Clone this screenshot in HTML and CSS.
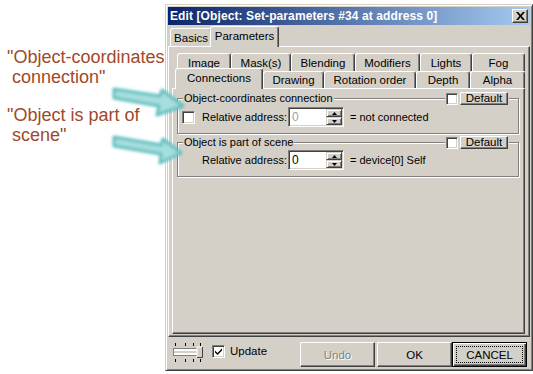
FILE: index.html
```html
<!DOCTYPE html>
<html>
  <head>
    <title>Edit [Object: Set-parameters #34 at address 0]</title>
    <meta charset="UTF-8">
    <meta name="viewport" content="width=device-width, initial-scale=1">
    <link rel="stylesheet" href="styles.css">
  </head>
  <body>
    <div class="page">
      <div class="notes">
        <p class="note">"Object-coordinates<br>&nbsp;connection"</p>
        <p class="note">"Object is part of<br>&nbsp;scene"</p>
      </div>

      <div class="window">
        <div class="titlebar">
          <span class="title">Edit [Object: Set-parameters #34 at address 0]</span>
          <span class="close">
            <svg width="9" height="8" viewBox="0 0 9 8">
              <path d="M0 0h2.2l2.3 2.8 2.3-2.8h2.2l-3.4 4 3.4 4h-2.2l-2.3-2.8-2.3 2.8h-2.2l3.4-4z" fill="#000"/>
            </svg>
          </span>
        </div>

        <div class="tabrow top-tabs">
          <div class="tab" style="width:42px">Basics</div>
          <div class="tab active" style="width:69px">Parameters</div>
        </div>

        <div class="panel outer-panel">
          <div class="tabrow back-tabs">
            <div class="tab" style="width:54px">Image</div>
            <div class="tab" style="width:60px">Mask(s)</div>
            <div class="tab" style="width:64px">Blending</div>
            <div class="tab" style="width:65px">Modifiers</div>
            <div class="tab" style="width:52px">Lights</div>
            <div class="tab" style="width:53px">Fog</div>
          </div>
          <div class="tabrow front-tabs">
            <div class="tab active" style="width:88px">Connections</div>
            <div class="tab" style="width:61px">Drawing</div>
            <div class="tab" style="width:92px">Rotation order</div>
            <div class="tab" style="width:54px">Depth</div>
            <div class="tab" style="width:55px">Alpha</div>
          </div>

          <div class="panel inner-panel">
            <div class="group group-one">
              <div class="group-head">
                <span class="legend">Object-coordinates connection</span>
                <span class="head-right">
                  <span class="check"></span>
                  <span class="btn small-btn">Default</span>
                </span>
              </div>
              <div class="field-row">
                <span class="check"></span>
                <span class="field-label">Relative address:</span>
                <span class="spin">
                  <span class="spin-value disabled">0</span>
                  <span class="spin-buttons">
                    <span class="spin-btn"><svg width="5" height="3" viewBox="0 0 5 3"><path d="M2.5 0L5 3H0z" fill="#000"/></svg></span>
                    <span class="spin-btn"><svg width="5" height="3" viewBox="0 0 5 3"><path d="M0 0h5L2.5 3z" fill="#000"/></svg></span>
                  </span>
                </span>
                <span class="field-note">= not connected</span>
              </div>
            </div>

            <div class="group group-two">
              <div class="group-head">
                <span class="legend">Object is part of scene</span>
                <span class="head-right">
                  <span class="check"></span>
                  <span class="btn small-btn">Default</span>
                </span>
              </div>
              <div class="field-row">
                <span class="check-space"></span>
                <span class="field-label">Relative address:</span>
                <span class="spin">
                  <span class="spin-value">0</span>
                  <span class="spin-buttons">
                    <span class="spin-btn"><svg width="5" height="3" viewBox="0 0 5 3"><path d="M2.5 0L5 3H0z" fill="#000"/></svg></span>
                    <span class="spin-btn"><svg width="5" height="3" viewBox="0 0 5 3"><path d="M0 0h5L2.5 3z" fill="#000"/></svg></span>
                  </span>
                </span>
                <span class="field-note">= device[0] Self</span>
              </div>
            </div>
          </div>
        </div>

        <div class="footer">
          <svg class="slider" width="32" height="22" viewBox="0 0 32 22">
            <g fill="#000">
              <rect x="2" y="1" width="1" height="3"/><rect x="12" y="1" width="1" height="3"/>
              <rect x="20" y="1" width="1" height="3"/><rect x="27" y="1" width="1" height="3"/>
              <rect x="2" y="17" width="1" height="3"/><rect x="12" y="17" width="1" height="3"/>
              <rect x="20" y="17" width="1" height="3"/><rect x="27" y="17" width="1" height="3"/>
            </g>
            <rect x="0.5" y="6.5" width="26" height="7" fill="#fff" stroke="#808080"/>
            <rect x="1" y="9" width="25" height="2" fill="#d4d0c8"/>
            <rect x="24" y="5" width="6" height="11" fill="#d4d0c8"/>
            <path d="M24 16V5h6" fill="none" stroke="#fff"/>
            <path d="M24 15.5h5.5V5" fill="none" stroke="#404040"/>
          </svg>
          <span class="check checked">
            <svg width="9" height="9" viewBox="0 0 9 9"><path d="M1 3.5l2.5 2.5 4.5-4.5v2l-4.5 4.5-2.5-2.5z" fill="#000"/></svg>
          </span>
          <span class="update">Update</span>
          <span class="btn big-btn disabled-btn">Undo</span>
          <span class="btn big-btn">OK</span>
          <span class="btn big-btn default-btn"><span class="focus">CANCEL</span></span>
        </div>
      </div>

      <svg class="arrows" width="533" height="374" viewBox="0 0 533 374">
        <defs>
          <filter id="glow" x="-20%" y="-50%" width="140%" height="200%">
            <feGaussianBlur stdDeviation="1.4"/>
          </filter>
        </defs>
        <g filter="url(#glow)" stroke="#5fbfc0" stroke-width="3" stroke-linejoin="round" fill="#a6dedd">
          <path d="M114 89L160 96L162 90L183 106L157 115L159 106L114 98Z"/>
          <path d="M114 137L161 145L163 139L181 153L160 163L161 154L114 146Z"/>
        </g>
      </svg>
    </div>
  </body>
</html>
```

FILE: styles.css
```css
/* page with notes on the left and the dialog on the right */
body {
	margin: 0;
	background-color: #fff;
	font-family: "Liberation Sans", Arial, sans-serif;
	font-size: 11px;
	color: #000;
}
.page {
	position: relative;
	display: flex;
	width: 533px;
	height: 374px;
	overflow: hidden;
}
.notes {
	width: 165px;
	padding-top: 47px;
	box-sizing: border-box;
}
.note {
	margin: 0 0 18px 7px;
	font-size: 18px;
	line-height: 20px;
	color: #a0492a;
	white-space: nowrap;
}
.arrows {
	position: absolute;
	left: 0;
	top: 0;
	pointer-events: none;
}

/* the window */
.window {
	margin-top: 4px;
	width: 368px;
	height: 367px;
	box-sizing: border-box;
	padding: 2px;
	background-color: #d4d0c8;
	border: 1px solid;
	border-color: #d4d0c8 #404040 #404040 #d4d0c8;
	box-shadow: inset 1px 1px #fff, inset -1px -1px #808080;
	display: flex;
	flex-direction: column;
}
.titlebar {
	height: 18px;
	display: flex;
	align-items: center;
	justify-content: space-between;
	padding: 0 2px 0 2px;
	background: linear-gradient(to right, #0a246a, #a6caf0);
	color: #fff;
	font-weight: bold;
	font-size: 12px;
	letter-spacing: 0.1px;
}
.close {
	width: 16px;
	height: 14px;
	box-sizing: border-box;
	display: flex;
	align-items: center;
	justify-content: center;
	background-color: #d4d0c8;
	border: 1px solid;
	border-color: #fff #404040 #404040 #fff;
	box-shadow: inset -1px -1px #808080;
}

/* tabs */
.tabrow {
	display: flex;
	align-items: flex-end;
}
.tab {
	height: 18px;
	box-sizing: border-box;
	display: flex;
	align-items: center;
	justify-content: center;
	border: 1px solid;
	border-bottom: none;
	border-color: #fff #404040 #fff #fff;
	border-radius: 3px 3px 0 0;
	box-shadow: inset -1px 0 #808080;
	background-color: #d4d0c8;
	white-space: nowrap;
	font-size: 11.5px;
}
.tab.active {
	position: relative;
	z-index: 1;
	height: 21px;
	margin-bottom: -1px;
	padding-bottom: 2px;
}
.top-tabs {
	height: 21px;
	padding-left: 2px;
}
.top-tabs .tab.active {
	margin-left: -2px;
}
.back-tabs {
	height: 18px;
	padding-left: 5px;
}
.front-tabs {
	height: 17px;
	padding-left: 3px;
}
.front-tabs .tab {
	height: 17px;
}
.front-tabs .tab.active {
	height: 21px;
}

/* 3d panels */
.panel {
	box-sizing: border-box;
	border: 1px solid;
	border-color: #fff #404040 #404040 #fff;
	box-shadow: inset -1px -1px #808080;
}
.outer-panel {
	height: 291px;
	padding: 6px 1px 2px 3px;
}
.inner-panel {
	width: 353px;
	height: 246px;
	padding: 0 4px 0 4px;
}

/* group boxes */
.group {
	width: 342px;
	box-sizing: border-box;
	border: 1px solid #808080;
	box-shadow: inset 1px 1px #fff, 1px 1px #fff;
}
.group-one {
	margin-top: 9px;
	height: 36px;
}
.group-two {
	margin-top: 8px;
	height: 35px;
}
.group-head {
	height: 13px;
	margin-top: -7px;
	display: flex;
	justify-content: space-between;
	align-items: center;
	padding: 0 9px 0 5px;
}
.legend {
	background-color: #d4d0c8;
	padding: 0 1px;
	line-height: 13px;
}
.head-right {
	display: flex;
	align-items: center;
	gap: 2px;
	background-color: #d4d0c8;
	padding: 0 1px;
	height: 13px;
}
.field-row {
	display: flex;
	align-items: center;
	height: 20px;
	padding-left: 4px;
	margin-top: 2px;
}
.group-two .field-row {
	margin-top: 1px;
}
.field-label {
	width: 86px;
	padding-left: 7px;
}
.check-space {
	width: 13px;
}
.field-note {
	margin-left: 6px;
}

/* controls */
.check {
	width: 13px;
	height: 13px;
	box-sizing: border-box;
	display: inline-flex;
	align-items: center;
	justify-content: center;
	background-color: #fff;
	border: 1px solid;
	border-color: #808080 #fff #fff #808080;
	box-shadow: inset 1px 1px #404040, inset -1px -1px #d4d0c8;
}
.head-right .check {
	width: 12px;
	height: 12px;
}
.spin {
	width: 56px;
	height: 20px;
	box-sizing: border-box;
	display: flex;
	background-color: #fff;
	border: 1px solid;
	border-color: #808080 #fff #fff #808080;
	box-shadow: inset 1px 1px #404040, inset -1px -1px #d4d0c8;
	padding: 2px 1px 2px 2px;
}
.spin-value {
	flex: 1;
	padding-left: 1px;
	line-height: 14px;
	font-size: 12px;
}
.spin-value.disabled {
	color: #a0a0a0;
}
.spin-buttons {
	display: flex;
	flex-direction: column;
	width: 16px;
	margin-top: -1px;
	margin-bottom: -1px;
}
.spin-btn {
	flex: 1;
	box-sizing: border-box;
	display: flex;
	align-items: center;
	justify-content: center;
	background-color: #d4d0c8;
	border: 1px solid;
	border-color: #d4d0c8 #404040 #404040 #d4d0c8;
	box-shadow: inset 1px 1px #fff, inset -1px -1px #808080;
}
.btn {
	box-sizing: border-box;
	display: inline-flex;
	align-items: center;
	justify-content: center;
	background-color: #d4d0c8;
	border: 1px solid;
	border-color: #fff #404040 #404040 #fff;
	box-shadow: inset -1px -1px #808080;
}
.small-btn {
	width: 48px;
	height: 13px;
	line-height: 11px;
	font-size: 11.5px;
}

/* footer */
.footer {
	flex: 1;
	display: flex;
	align-items: flex-start;
	padding: 5px 3px 0 5px;
}
.footer .check {
	margin: 3px 0 0 7px;
}
.update {
	margin: 3px 0 0 5px;
	line-height: 13px;
	font-size: 11.5px;
}
.big-btn {
	width: 75px;
	height: 25px;
	font-size: 11.5px;
}
.disabled-btn {
	margin-left: auto;
	color: #808080;
	text-shadow: 1px 1px #fff;
}
.big-btn + .big-btn {
	margin-left: 2px;
}
.default-btn {
	margin-left: 0 !important;
	border: 1px solid #000;
	box-shadow: inset 1px 1px #fff, inset -1px -1px #404040, inset -2px -2px #808080;
	padding: 3px;
}
.focus {
	flex: 1;
	align-self: stretch;
	display: flex;
	align-items: center;
	justify-content: center;
	border: 1px dotted #000;
}
```
